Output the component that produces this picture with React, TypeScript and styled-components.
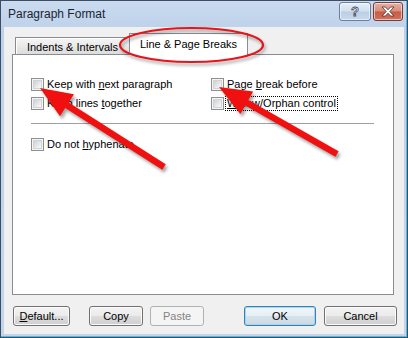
import styled, { createGlobalStyle, css } from 'styled-components';

const GlobalStyle = createGlobalStyle`
  html, body { margin: 0; padding: 0; background: #ffffff; }
  body { font-family: "Liberation Sans", Arial, sans-serif; font-size: 11px; color: #000; }
`;

type Pt = [number, number];

// arrow outline: shaft + triangular head, tip last
function arrowPoints(tail: Pt, tip: Pt, shaft = 6.5, headLen = 32, headW = 26) {
  const dx = tip[0] - tail[0];
  const dy = tip[1] - tail[1];
  const len = Math.hypot(dx, dy);
  const ux = dx / len;
  const uy = dy / len;
  const nx = -uy;
  const ny = ux;
  const bx = tip[0] - ux * headLen;
  const by = tip[1] - uy * headLen;
  const pts: Pt[] = [
    [tail[0] + (nx * shaft) / 2, tail[1] + (ny * shaft) / 2],
    [bx + (nx * shaft) / 2, by + (ny * shaft) / 2],
    [bx + (nx * headW) / 2, by + (ny * headW) / 2],
    tip,
    [bx - (nx * headW) / 2, by - (ny * headW) / 2],
    [bx - (nx * shaft) / 2, by - (ny * shaft) / 2],
    [tail[0] - (nx * shaft) / 2, tail[1] - (ny * shaft) / 2],
  ];
  return pts.map(p => `${p[0].toFixed(1)},${p[1].toFixed(1)}`).join(' ');
}

const arrows = [
  { tail: [164, 167] as Pt, tip: [40, 88] as Pt },
  { tail: [337, 154] as Pt, tip: [219, 87] as Pt },
];

export default function App() {
  return (
    <>
      <GlobalStyle />
      <Window>
        <TitleBar>
          <Title>Paragraph Format</Title>
          <CaptionButtons>
            <CaptionButton>
              <HelpGlyph>?</HelpGlyph>
            </CaptionButton>
            <CaptionButton $close>
              <svg width="14" height="11" viewBox="0 0 14 11">
                <path
                  d="M1 1 H4.5 L7 3.8 L9.5 1 H13 L8.8 5.5 L13 10 H9.5 L7 7.2 L4.5 10 H1 L5.2 5.5 Z"
                  fill="#ffffff"
                  stroke="#5a2a22"
                  strokeWidth="0.8"
                  strokeLinejoin="round"
                />
              </svg>
            </CaptionButton>
          </CaptionButtons>
        </TitleBar>
        <Client>
          <TabStrip>
            <Tab>Indents &amp; Intervals</Tab>
            <Tab $active>Line &amp; Page Breaks</Tab>
          </TabStrip>
          <Panel>
            <OptionGrid>
              <CheckRow>
                <Box />
                <Label>
                  Keep with <u>n</u>ext paragraph
                </Label>
              </CheckRow>
              <CheckRow>
                <Box />
                <Label>
                  Page <u>b</u>reak before
                </Label>
              </CheckRow>
              <CheckRow>
                <Box />
                <Label>
                  Keep lines <u>t</u>ogether
                </Label>
              </CheckRow>
              <CheckRow>
                <Box />
                <Label $focused>
                  <u>W</u>idow/Orphan control
                </Label>
              </CheckRow>
            </OptionGrid>
            <Separator />
            <CheckRow>
              <Box />
              <Label>
                Do not <u>h</u>yphenate
              </Label>
            </CheckRow>
          </Panel>
          <ButtonRow>
            <Button $w={57}>
              <u>D</u>efault...
            </Button>
            <Button $w={54} $ml={19}>
              Copy
            </Button>
            <Button $w={54} $ml={7} disabled>
              Paste
            </Button>
            <Spacer />
            <Button $w={72} $default>
              OK
            </Button>
            <Button $w={73} $ml={8}>
              Cancel
            </Button>
          </ButtonRow>
        </Client>
        <Overlay width="408" height="338" viewBox="0 0 408 338">
          <defs>
            <filter id="soft" x="-20%" y="-20%" width="140%" height="140%">
              <feGaussianBlur stdDeviation="1.4" />
            </filter>
          </defs>
          <ellipse
            cx="193"
            cy="47.5"
            rx="71.5"
            ry="17"
            fill="none"
            stroke="#000"
            strokeOpacity="0.3"
            strokeWidth="2.5"
            filter="url(#soft)"
          />
          <ellipse cx="191.5" cy="45" rx="71.5" ry="17" fill="none" stroke="#e8141a" strokeWidth="2.2" />
          {arrows.map((a, i) => (
            <g key={i}>
              <polygon
                points={arrowPoints(a.tail, a.tip)}
                fill="#000"
                fillOpacity="0.35"
                transform="translate(2 3)"
                filter="url(#soft)"
              />
              <polygon points={arrowPoints(a.tail, a.tip)} fill="#f01010" />
            </g>
          ))}
        </Overlay>
      </Window>
    </>
  );
}

const Window = styled.div`
  position: relative;
  box-sizing: border-box;
  width: 408px;
  height: 338px;
  display: flex;
  flex-direction: column;
  border: 1px solid #3d4d63;
  background: linear-gradient(#cadbef, #bed2ea 26px, #c2d5eb);
  box-shadow: inset -1px -1px 0 #49bde8;
  overflow: hidden;
`;
const TitleBar = styled.div`
  height: 26px;
  display: flex;
  align-items: flex-start;
  padding: 0 4px 0 7px;
`;
const Title = styled.div`
  flex: 1;
  line-height: 26px;
  font-size: 12px;
  color: #1a2430;
`;
const CaptionButtons = styled.div`
  display: flex;
  gap: 2px;
  margin-top: 1px;
`;
const CaptionButton = styled.div<{ $close?: boolean }>`
  box-sizing: border-box;
  width: ${p => (p.$close ? 30 : 32)}px;
  height: 19px;
  display: flex;
  align-items: center;
  justify-content: center;
  border-radius: 3px;
  border: 1px solid ${p => (p.$close ? '#7a3a30' : '#6c7f99')};
  box-shadow: inset 0 0 0 1px rgba(255, 255, 255, 0.55);
  background: ${p =>
    p.$close
      ? 'linear-gradient(#e3b0a6, #d68c7d 48%, #c55a44 52%, #d0735f)'
      : 'linear-gradient(#e6eef8, #d2dfee 48%, #bccee4 52%, #c9d9ec)'};
`;
const HelpGlyph = styled.span`
  font: bold 13px "Liberation Sans", Arial, sans-serif;
  color: #ffffff;
  -webkit-text-stroke: 0.8px #3d4d63;
  line-height: 15px;
`;
const Client = styled.div`
  flex: 1;
  margin: 0 3px 3px;
  background: #f0f0f0;
  padding: 6px 10px 0 8px;
  display: flex;
  flex-direction: column;
`;
const TabStrip = styled.div`
  display: flex;
  align-items: flex-end;
  height: 22px;
  padding-left: 3px;
  margin-bottom: -1px;
  position: relative;
  z-index: 1;
`;
const Tab = styled.div<{ $active?: boolean }>`
  box-sizing: border-box;
  display: flex;
  align-items: center;
  justify-content: center;
  border: 1px solid #898c95;
  border-bottom: none;
  white-space: nowrap;
  ${p =>
    p.$active
      ? css`
          width: 119px;
          height: 22px;
          background: #ffffff;
          padding-bottom: 1px;
        `
      : css`
          width: 114px;
          height: 17px;
          margin-bottom: 1px;
          border-right: none;
          background: linear-gradient(#f6f6f6, #e9e9e9 50%, #dcdcdc);
          box-shadow: inset 1px 1px 0 #ffffff;
          padding-top: 1px;
        `}
`;
const Panel = styled.div`
  box-sizing: border-box;
  height: 241px;
  background: #ffffff;
  border: 1px solid #898c95;
  padding: 23px 0 0 18px;
`;
const OptionGrid = styled.div`
  display: grid;
  grid-template-columns: 180px auto;
  row-gap: 6px;
`;
const CheckRow = styled.div`
  display: flex;
  align-items: center;
  height: 13px;
`;
const Box = styled.span`
  position: relative;
  flex: none;
  box-sizing: border-box;
  width: 13px;
  height: 13px;
  border: 1px solid #8e8f8f;
  background: #f5f5f5;
  &::after {
    content: '';
    position: absolute;
    inset: 1px;
    border: 1px solid #d0d3d7;
    background: linear-gradient(135deg, #cdd0d5, #eeeeee 70%, #f8f8f8);
  }
`;
const Label = styled.span<{ $focused?: boolean }>`
  margin-left: 3px;
  line-height: 13px;
  white-space: nowrap;
  ${p =>
    p.$focused &&
    css`
      margin-left: 2px;
      padding: 0 1px;
      outline: 1px dotted #000;
    `}
`;
const Separator = styled.div`
  width: 343px;
  height: 1px;
  background: #a0a0a0;
  margin: 13px 0 14px;
`;
const ButtonRow = styled.div`
  display: flex;
  margin: 11px -3px 0 1px;
`;
const Spacer = styled.div`
  flex: 1;
`;
const Button = styled.button<{ $w: number; $ml?: number; $default?: boolean }>`
  box-sizing: border-box;
  width: ${p => p.$w}px;
  height: 20px;
  margin: 0 0 0 ${p => p.$ml ?? 0}px;
  padding: 0;
  font: 11px "Liberation Sans", Arial, sans-serif;
  color: #000;
  border-radius: 3px;
  border: 1px solid #707070;
  background: linear-gradient(#f2f2f2, #ebebeb 50%, #dddddd 50%, #cfcfcf);
  box-shadow: inset 0 0 0 1px #fbfbfb;
  ${p =>
    p.$default &&
    css`
      border-color: #3c7fb1;
      box-shadow: inset 0 0 0 1px #9ed8f6;
      background: linear-gradient(#f0f6fa, #e6eff5 50%, #d6e3ec 50%, #cad9e4);
    `}
  &:disabled {
    color: #838383;
    border-color: #adb2b5;
    background: #f4f4f4;
    box-shadow: none;
  }
`;
const Overlay = styled.svg`
  position: absolute;
  top: -1px;
  left: -1px;
  pointer-events: none;
  z-index: 2;
`;
